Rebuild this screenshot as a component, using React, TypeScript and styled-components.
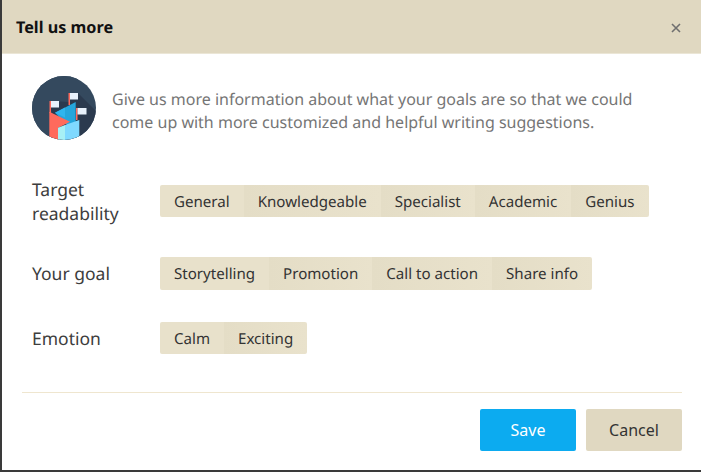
import * as React from 'react'
import styled, { createGlobalStyle } from 'styled-components'

const GlobalStyle = createGlobalStyle`
  html, body {
    margin: 0;
    padding: 0;
    height: 100%;
    background: #3a3a3a;
    overflow: hidden;
  }
`

const Modal = styled.div`
  width: 699px;
  height: 470px;
  margin-left: 2px;
  background: #fff;
  font-family: 'Noto Sans', sans-serif;
  color: #333;
  display: flex;
  flex-direction: column;
  text-rendering: geometricPrecision;
`

const Header = styled.div`
  height: 54px;
  box-sizing: border-box;
  background: #e0d8c1;
  border-bottom: 1px solid #ebe6d6;
  display: flex;
  align-items: center;
  justify-content: space-between;
  padding: 0 20px 0 14px;
  flex: none;
`

const Title = styled.h2`
  margin: 0;
  font-size: 16.2px;
  font-weight: 700;
  color: #111;
`

const CloseIcon = styled.svg`
  width: 10px;
  height: 10px;
  margin-top: 2px;
  stroke: #6f6f6f;
  stroke-width: 1.6;
`

const Intro = styled.div`
  display: flex;
  align-items: center;
  gap: 16px;
  padding: 22px 30px 0;
`

const IntroText = styled.p`
  margin: 0;
  padding-top: 6px;
  font-size: 16px;
  line-height: 23px;
  color: #757575;
`

const Rows = styled.div`
  display: flex;
  flex-direction: column;
  padding: 0 30px;
  margin-top: 37px;
  gap: 32px;
`

const Row = styled.div`
  display: flex;
  align-items: center;
`

const RowLabel = styled.div`
  width: 128px;
  padding-top: 1px;
  margin-bottom: -1px;
  font-size: 17.5px;
  line-height: 24px;
  color: #3d3d3d;
`

const Segments = styled.div`
  display: flex;
  border-radius: 2px;
  overflow: hidden;
`

const Segment = styled.div<{ $first?: boolean }>`
  height: 32.5px;
  box-sizing: border-box;
  padding: 2px 14px 0;
  display: flex;
  align-items: center;
  font-size: 15.1px;
  color: #333;
  background: ${p => (p.$first ? '#e8e1cb' : 'linear-gradient(90deg, #e4ddc6, #e9e2cc)')};
`

const Footer = styled.div`
  margin: auto 19px 0 20px;
  border-top: 1px solid #efe6cf;
  padding: 16px 0 19px;
  display: flex;
  justify-content: flex-end;
  gap: 10px;
`

const Button = styled.button<{ $primary?: boolean }>`
  width: 96px;
  height: 42px;
  border: 0;
  border-radius: 2px;
  font-family: inherit;
  font-size: 16px;
  background: ${p => (p.$primary ? '#0cabf0' : '#e0d8c1')};
  color: ${p => (p.$primary ? '#fff' : '#333')};
`

const Logo = () => (
  <svg width='64' height='64' viewBox='0 0 64 64' style={{ flex: 'none' }}>
    <defs>
      <clipPath id='logo-clip'>
        <circle cx='32' cy='32' r='32' />
      </clipPath>
    </defs>
    <g clipPath='url(#logo-clip)'>
      <rect width='64' height='64' fill='#34495e' />
      <path d='M46 17 L70 41 V70 H30 L18 30 Z' fill='#2b3a4e' />
      <path d='M0 0 H46 V17 L37 17 V26 L19 25 L17 36 L30 70 H0 Z' fill='#34495e' />
      <rect x='17.5' y='25' width='1.5' height='12' fill='#ff6a5c' />
      <rect x='19' y='25' width='8' height='6.5' fill='#e8f1fb' />
      <rect x='36.5' y='17' width='1.5' height='12' fill='#ff6a5c' />
      <rect x='38' y='17' width='8' height='6.5' fill='#e8f1fb' />
      <rect x='44' y='32' width='1.5' height='12' fill='#ff6a5c' />
      <rect x='45.5' y='32' width='9' height='6.5' fill='#e8f1fb' />
      <path d='M23 36.7 L43.7 26 V46 L38 52 Z' fill='#25a6dc' />
      <path d='M23 36.7 L33 31.5 V41.5 Z' fill='#2fb5ee' />
      <path d='M17.3 35.7 L38 45.7 L26.3 51.7 V70 H17.3 Z' fill='#ff6a5c' />
      <path d='M26 51.7 L33 49 V70 H26 Z' fill='#a7f0f5' />
      <path d='M33 49 L47.3 44 V70 H33 Z' fill='#7fd9ff' />
    </g>
  </svg>
)

const rows: { label: React.ReactNode; items: string[] }[] = [
  { label: <>Target<br />readability</>, items: ['General', 'Knowledgeable', 'Specialist', 'Academic', 'Genius'] },
  { label: 'Your goal', items: ['Storytelling', 'Promotion', 'Call to action', 'Share info'] },
  { label: 'Emotion', items: ['Calm', 'Exciting'] },
]

const App: React.FunctionComponent = () => (
  <>
    <GlobalStyle />
    <Modal>
      <Header>
        <Title>Tell us more</Title>
        <CloseIcon viewBox='0 0 10 10'>
          <path d='M1 1 L9 9 M9 1 L1 9' />
        </CloseIcon>
      </Header>
      <Intro>
        <Logo />
        <IntroText>
          Give us more information about what your goals are so that we could
          <br />
          come up with more customized and helpful writing suggestions.
        </IntroText>
      </Intro>
      <Rows>
        {rows.map((row, i) => (
          <Row key={i}>
            <RowLabel>{row.label}</RowLabel>
            <Segments>
              {row.items.map((item, j) => (
                <Segment key={item} $first={j === 0}>{item}</Segment>
              ))}
            </Segments>
          </Row>
        ))}
      </Rows>
      <Footer>
        <Button $primary>Save</Button>
        <Button>Cancel</Button>
      </Footer>
    </Modal>
  </>
)

export default App
